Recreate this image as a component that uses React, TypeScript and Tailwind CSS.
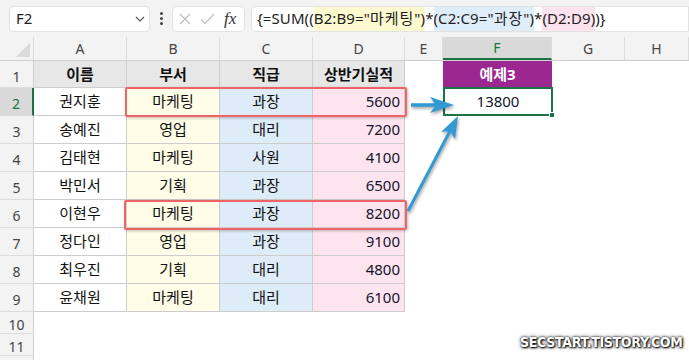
import React from "react";

const rows = [
  ["권지훈", "마케팅", "과장", "5600"],
  ["송예진", "영업", "대리", "7200"],
  ["김태현", "마케팅", "사원", "4100"],
  ["박민서", "기획", "과장", "6500"],
  ["이현우", "마케팅", "과장", "8200"],
  ["정다인", "영업", "과장", "9100"],
  ["최우진", "기획", "대리", "4800"],
  ["윤채원", "마케팅", "대리", "6100"],
];

const cols = [
  { label: "A", w: "w-[93px]" },
  { label: "B", w: "w-[93px]" },
  { label: "C", w: "w-[93px]" },
  { label: "D", w: "w-[92px]" },
  { label: "E", w: "w-[38px]" },
  { label: "F", w: "w-[109px]" },
  { label: "G", w: "w-[73px]" },
  { label: "H", w: "flex-1" },
];

const font = "font-['Noto_Sans','Noto_Sans_CJK_KR',sans-serif]";

const RowHead = ({ n, h, active }: { n?: number; h: string; active?: boolean }) => (
  <div
    className={`${h} w-[34px] shrink-0 flex items-center justify-center pt-1 text-[14px] border-b border-[#dcdcdc] ${
      active
        ? "bg-[#d9d9d9] text-[#1e7145] border-r-2 border-r-[#1e7145]"
        : "bg-[#f3f3f3] text-[#444] border-r border-r-[#cfcfcf]"
    }`}
  >
    {n}
  </div>
);

const Blank = () => <div className="flex-1" />;

const App = () => {
  return (
    <div className={`relative w-[689px] h-[360px] overflow-hidden bg-white ${font}`}>
      {/* formula bar */}
      <div className="h-[37px] bg-[#f3f3f3] flex items-center pl-[9px] gap-[6px]">
        <div className="w-[141px] h-[26px] bg-white border border-[#e2e2e2] rounded-[5px] flex items-center justify-between pl-[6px] pr-[4px] text-[15px] text-[#222]">
          <span>F2</span>
          <svg width="10" height="6" viewBox="0 0 10 6">
            <path d="M1 1l4 4 4-4" fill="none" stroke="#555" strokeWidth="1.2" />
          </svg>
        </div>
        <div className="w-[10px] flex flex-col items-center gap-[2px]">
          <span className="w-[3px] h-[3px] rounded-full bg-[#444]" />
          <span className="w-[3px] h-[3px] rounded-full bg-[#444]" />
          <span className="w-[3px] h-[3px] rounded-full bg-[#444]" />
        </div>
        <div className="w-[73px] h-[26px] bg-white border border-[#e2e2e2] rounded-[5px] flex items-center pl-[6px] gap-[9px]">
          <svg width="12" height="12" viewBox="0 0 12 12">
            <path d="M1 1l10 10M11 1L1 11" stroke="#bdbdbd" strokeWidth="1.1" />
          </svg>
          <svg width="15" height="12" viewBox="0 0 15 12">
            <path d="M1 6.5l4 4L14 1" fill="none" stroke="#bdbdbd" strokeWidth="1.1" />
          </svg>
          <span className="font-['Liberation_Serif',serif] italic text-[17px] text-[#333] leading-none">fx</span>
        </div>
        <div className="flex-1 h-[26px] bg-white border border-[#e2e2e2] rounded-l-[5px] flex items-stretch pl-[5px] text-[15px] text-[#222] whitespace-pre tracking-[0.1px]">
          <span className="flex items-center">{"{=SUM(("}</span>
          <span className="flex items-center bg-[#fffbd1]">
            B2:B9="<span className="tracking-[1px]">마케팅</span>")
          </span>
          <span className="flex items-center">*</span>
          <span className="flex items-center bg-[#dfedfb]">
            (C2:C9="<span className="tracking-[1px]">과장</span>")
          </span>
          <span className="flex items-center">*</span>
          <span className="flex items-center bg-[#fde3ee]">{"(D2:D9)"}</span>
          <span className="flex items-center">{")}"}</span>
        </div>
      </div>

      {/* column headers */}
      <div className="flex h-[24px] bg-[#f3f3f3] border-b border-[#cfcfcf]">
        <div className="w-[34px] shrink-0 relative border-r border-[#dcdcdc]">
          <div className="absolute right-[3px] bottom-[3px] w-0 h-0 border-l-[14px] border-l-transparent border-b-[14px] border-b-[#dadada]" />
        </div>
        {cols.map((c) => (
          <div
            key={c.label}
            className={`${c.w} shrink-0 flex items-center justify-center text-[14px] border-r border-[#dcdcdc] ${
              c.label === "F" ? "bg-[#d9d9d9] text-[#1e7145] border-b-2 border-b-[#1e7145]" : "text-[#444]"
            }`}
          >
            {c.label}
          </div>
        ))}
      </div>

      {/* row 1 */}
      <div className="flex">
        <RowHead n={1} h="h-[27px]" />
        {["이름", "부서", "직급", "상반기실적"].map((t, i) => (
          <div
            key={t}
            className={`${i === 3 ? "w-[92px]" : "w-[93px]"} h-[27px] shrink-0 flex items-center justify-center bg-[#e8e7e7] font-bold text-[15px] text-[#111] border-r border-b border-[#cdcdcd]`}
          >
            {t}
          </div>
        ))}
        <div className="w-[38px] shrink-0" />
        <div className="w-[109px] h-[27px] shrink-0 flex items-center justify-center bg-[#9c2790] text-white font-bold text-[15px]">
          예제3
        </div>
        <Blank />
      </div>

      {/* data rows */}
      {rows.map((r, idx) => (
        <div key={idx} className="flex">
          <RowHead n={idx + 2} h="h-[28px]" active={idx === 0} />
          <div className="w-[93px] h-[28px] shrink-0 flex items-center justify-center text-[15px] text-[#111] border-r border-b border-[#cdcdcd]">
            {r[0]}
          </div>
          <div className="w-[93px] h-[28px] shrink-0 flex items-center justify-center text-[15px] text-[#111] bg-[#fffde7] border-r border-b border-[#cdcdcd]">
            {r[1]}
          </div>
          <div className="w-[93px] h-[28px] shrink-0 flex items-center justify-center text-[15px] text-[#111] bg-[#deebf8] border-r border-b border-[#cdcdcd]">
            {r[2]}
          </div>
          <div className="w-[92px] h-[28px] shrink-0 flex items-center justify-end pr-[4px] text-[15px] text-[#14142b] bg-[#fde4ee] border-r border-b border-[#cdcdcd]">
            {r[3]}
          </div>
          <div className="w-[38px] shrink-0" />
          {idx === 0 ? (
            <div className="relative w-[110px] h-[29px] -mt-px -mb-px shrink-0 flex items-center justify-center text-[15px] text-[#14142b] border-2 border-[#1e7145] bg-white">
              13800
              <span className="absolute -right-[4px] -bottom-[4px] w-[6px] h-[6px] bg-[#1e7145] border border-white" />
            </div>
          ) : (
            <div className="w-[109px] shrink-0" />
          )}
          <Blank />
        </div>
      ))}

      <div className="flex">
        <RowHead n={10} h="h-[22px]" />
        <Blank />
      </div>
      <div className="flex">
        <RowHead n={11} h="h-[22px]" />
        <Blank />
      </div>
      <div className="flex">
        <RowHead h="h-[22px]" />
        <Blank />
      </div>

      {/* red highlight boxes */}
      <div className="absolute left-[125px] top-[87px] w-[282px] h-[30px] border-2 border-[#ef6464] rounded-[2px] shadow-[1px_1px_3px_rgba(0,0,0,0.25)]" />
      <div className="absolute left-[124px] top-[200px] w-[283px] h-[30px] border-2 border-[#ef6464] rounded-[2px] shadow-[1px_1px_3px_rgba(0,0,0,0.25)]" />

      {/* arrows */}
      <svg
        className="absolute left-0 top-0 pointer-events-none [filter:drop-shadow(1px_2px_1.5px_rgba(0,0,0,0.35))]"
        width="689"
        height="360"
      >
        <line x1="411" y1="105" x2="437" y2="105" stroke="#3399d4" strokeWidth="3.5" />
        <polygon points="430,97 454,105 430,113 436,105" fill="#3399d4" />
        <line x1="408" y1="211" x2="450" y2="131" stroke="#3399d4" strokeWidth="3" />
        <polygon points="458,116 455,139 450,131 441,132" fill="#3399d4" />
      </svg>

      {/* watermark */}
      <div className="absolute left-[520px] top-[332px] font-['DejaVu_Sans_Condensed','DejaVu_Sans',sans-serif] font-bold text-[14px] tracking-[-0.3px] text-white [text-shadow:0_0_2px_#000,1px_1px_2px_#000,0_0_4px_rgba(0,0,0,0.6)]">
        SECSTART.TISTORY.COM
      </div>
    </div>
  );
};

export default App;
